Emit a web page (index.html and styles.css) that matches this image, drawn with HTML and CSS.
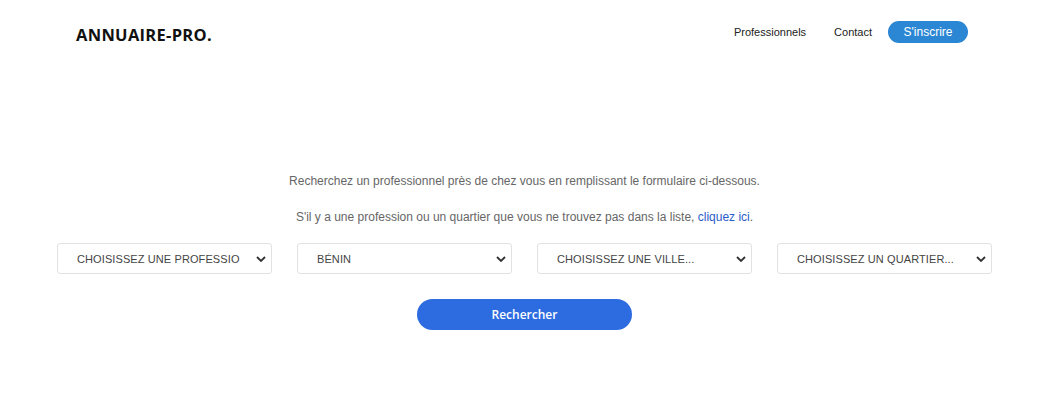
FILE: index.html
```html
<!DOCTYPE html>
<html lang="fr">
<head>
<meta charset="utf-8">
<title>Annuaire-Pro</title>
<link rel="stylesheet" href="styles.css">
</head>
<body>
<header class="header">
  <div class="logo">ANNUAIRE-PRO.</div>
  <nav class="nav">
    <a class="nav-link" href="#">Professionnels</a>
    <a class="nav-link" href="#">Contact</a>
    <a class="nav-btn" href="#">S'inscrire</a>
  </nav>
</header>
<main class="main">
  <p class="intro">Recherchez un professionnel près de chez vous en remplissant le formulaire ci-dessous.</p>
  <p class="intro second">S'il y a une profession ou un quartier que vous ne trouvez pas dans la liste, <a class="link" href="#">cliquez ici</a>.</p>
  <div class="selects">
    <div class="select"><span class="select-text">CHOISISSEZ UNE PROFESSIO</span><svg class="chev" viewBox="0 0 10 6"><path d="M1 1l4 4 4-4" fill="none" stroke="#333" stroke-width="1.8"/></svg></div>
    <div class="select"><span class="select-text">BÉNIN</span><svg class="chev" viewBox="0 0 10 6"><path d="M1 1l4 4 4-4" fill="none" stroke="#333" stroke-width="1.8"/></svg></div>
    <div class="select"><span class="select-text">CHOISISSEZ UNE VILLE...</span><svg class="chev" viewBox="0 0 10 6"><path d="M1 1l4 4 4-4" fill="none" stroke="#333" stroke-width="1.8"/></svg></div>
    <div class="select"><span class="select-text">CHOISISSEZ UN QUARTIER...</span><svg class="chev" viewBox="0 0 10 6"><path d="M1 1l4 4 4-4" fill="none" stroke="#333" stroke-width="1.8"/></svg></div>
  </div>
  <div class="btn-row"><button class="search-btn">Rechercher</button></div>
</main>
</body>
</html>
```
FILE: styles.css
```css
* { box-sizing: border-box; }
body {
  margin: 0;
  background: #fff;
  font-family: "Liberation Sans", Arial, sans-serif;
}
.header {
  display: flex;
  align-items: center;
  justify-content: space-between;
  width: 892px;
  margin-left: 76px;
  padding-top: 21px;
  height: 43px;
}
.logo {
  font-family: "Open Sans", "Noto Sans", sans-serif;
  font-weight: 700;
  font-size: 16.5px;
  color: #111;
  letter-spacing: 0.3px;
  padding-top: 4px;
}
.nav {
  display: flex;
  align-items: center;
}
.nav-link {
  font-size: 11px;
  color: #222;
  text-decoration: none;
  margin-right: 28px;
}
.nav-link + .nav-link { margin-right: 16px; }
.nav-btn {
  display: inline-flex;
  align-items: center;
  justify-content: center;
  width: 80px;
  height: 22px;
  border-radius: 11px;
  background: #2b87d3;
  color: #fff;
  font-size: 12px;
  text-decoration: none;
}
.main {
  width: 935px;
  margin-left: 57px;
  padding-top: 129px;
}
.intro {
  margin: 0;
  text-align: center;
  font-size: 12px;
  color: #666;
  line-height: 18px;
}
.second { margin-top: 18px; }
.link { color: #2a5bc8; text-decoration: none; }
.selects {
  display: grid;
  grid-template-columns: repeat(4, 215px);
  gap: 25px;
  margin-top: 17px;
}
.select {
  display: flex;
  align-items: center;
  justify-content: space-between;
  height: 31px;
  border: 1px solid #e2e2e2;
  border-radius: 3px;
  padding: 0 5px 0 19px;
}
.select-text {
  font-size: 11px;
  color: #444;
  letter-spacing: 0.1px;
}
.chev { width: 10px; height: 6px; }
.btn-row {
  display: flex;
  justify-content: center;
  margin-top: 25px;
}
.search-btn {
  width: 215px;
  height: 31px;
  border: none;
  border-radius: 16px;
  background: #2d6be0;
  color: #fff;
  font-family: "Open Sans", "Noto Sans", sans-serif;
  font-weight: 600;
  font-size: 12px;
}
```
